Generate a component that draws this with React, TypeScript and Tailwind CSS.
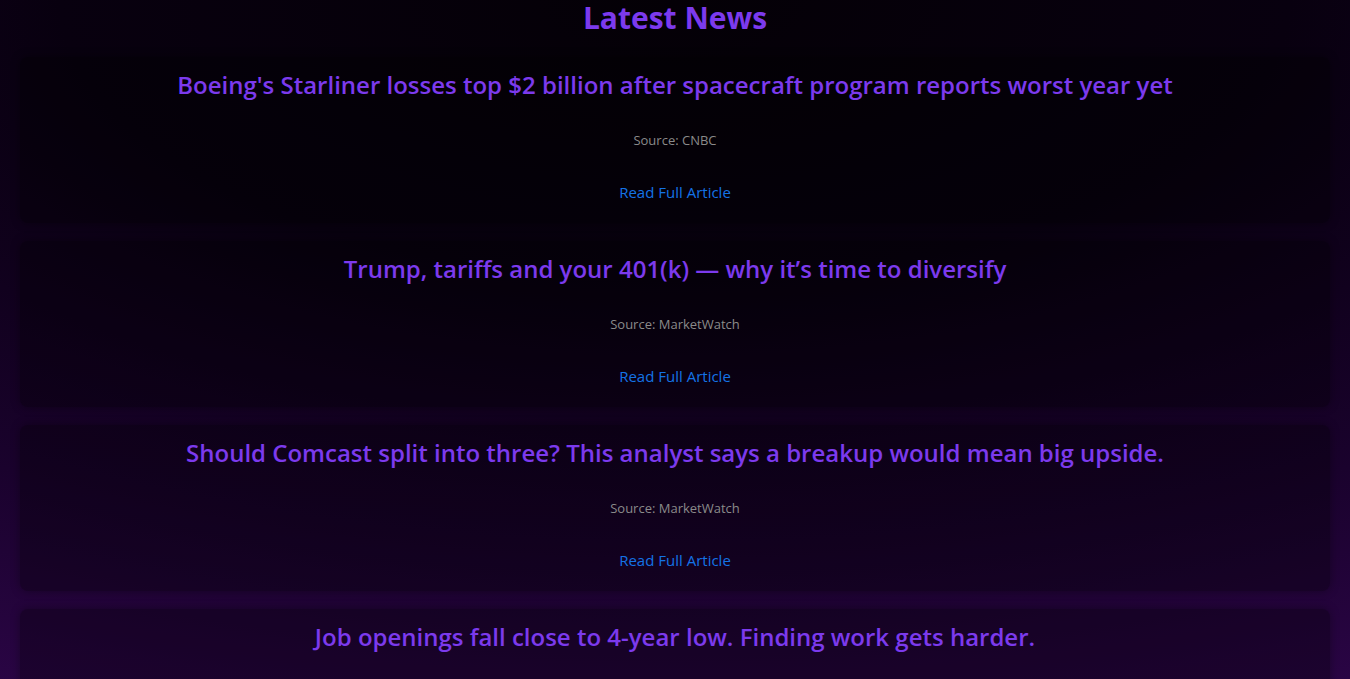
const NEWS = [
  {
    title: "Boeing's Starliner losses top $2 billion after spacecraft program reports worst year yet",
    source: "CNBC",
  },
  {
    title: "Trump, tariffs and your 401(k) — why it’s time to diversify",
    source: "MarketWatch",
  },
  {
    title: "Should Comcast split into three? This analyst says a breakup would mean big upside.",
    source: "MarketWatch",
  },
  {
    title: "Job openings fall close to 4-year low. Finding work gets harder.",
    source: "MarketWatch",
  },
];

export default function App() {
  return (
    <div className="min-h-screen bg-[radial-gradient(ellipse_130%_100%_at_50%_0%,#040006_0%,#08000f_35%,#1a022d_70%,#2b0546_95%)] px-5 pb-6 font-['Open_Sans',_'Liberation_Sans',_sans-serif]">
      <h1 className="text-center text-[30px] font-bold leading-9 text-[#7c3aed]">
        Latest News
      </h1>
      <div className="mt-[21px] flex flex-col gap-[18px]">
        {NEWS.map((item, i) => (
          <div
            key={i}
            className="rounded-lg bg-black/30 px-4 pt-[14px] pb-[19px] text-center shadow-[0_0_10px_rgba(0,0,0,0.35)]"
          >
            <h2 className="text-[24px] font-semibold leading-7 text-[#7c3aed]">
              {item.title}
            </h2>
            <p className="mt-[31px] text-[13px] leading-5 text-[#8a8a8a]">
              Source: {item.source}
            </p>
            <a
              href="#"
              className="mt-[30px] block text-[15px] leading-6 text-[#1473e6]"
            >
              Read Full Article
            </a>
          </div>
        ))}
      </div>
    </div>
  );
}
